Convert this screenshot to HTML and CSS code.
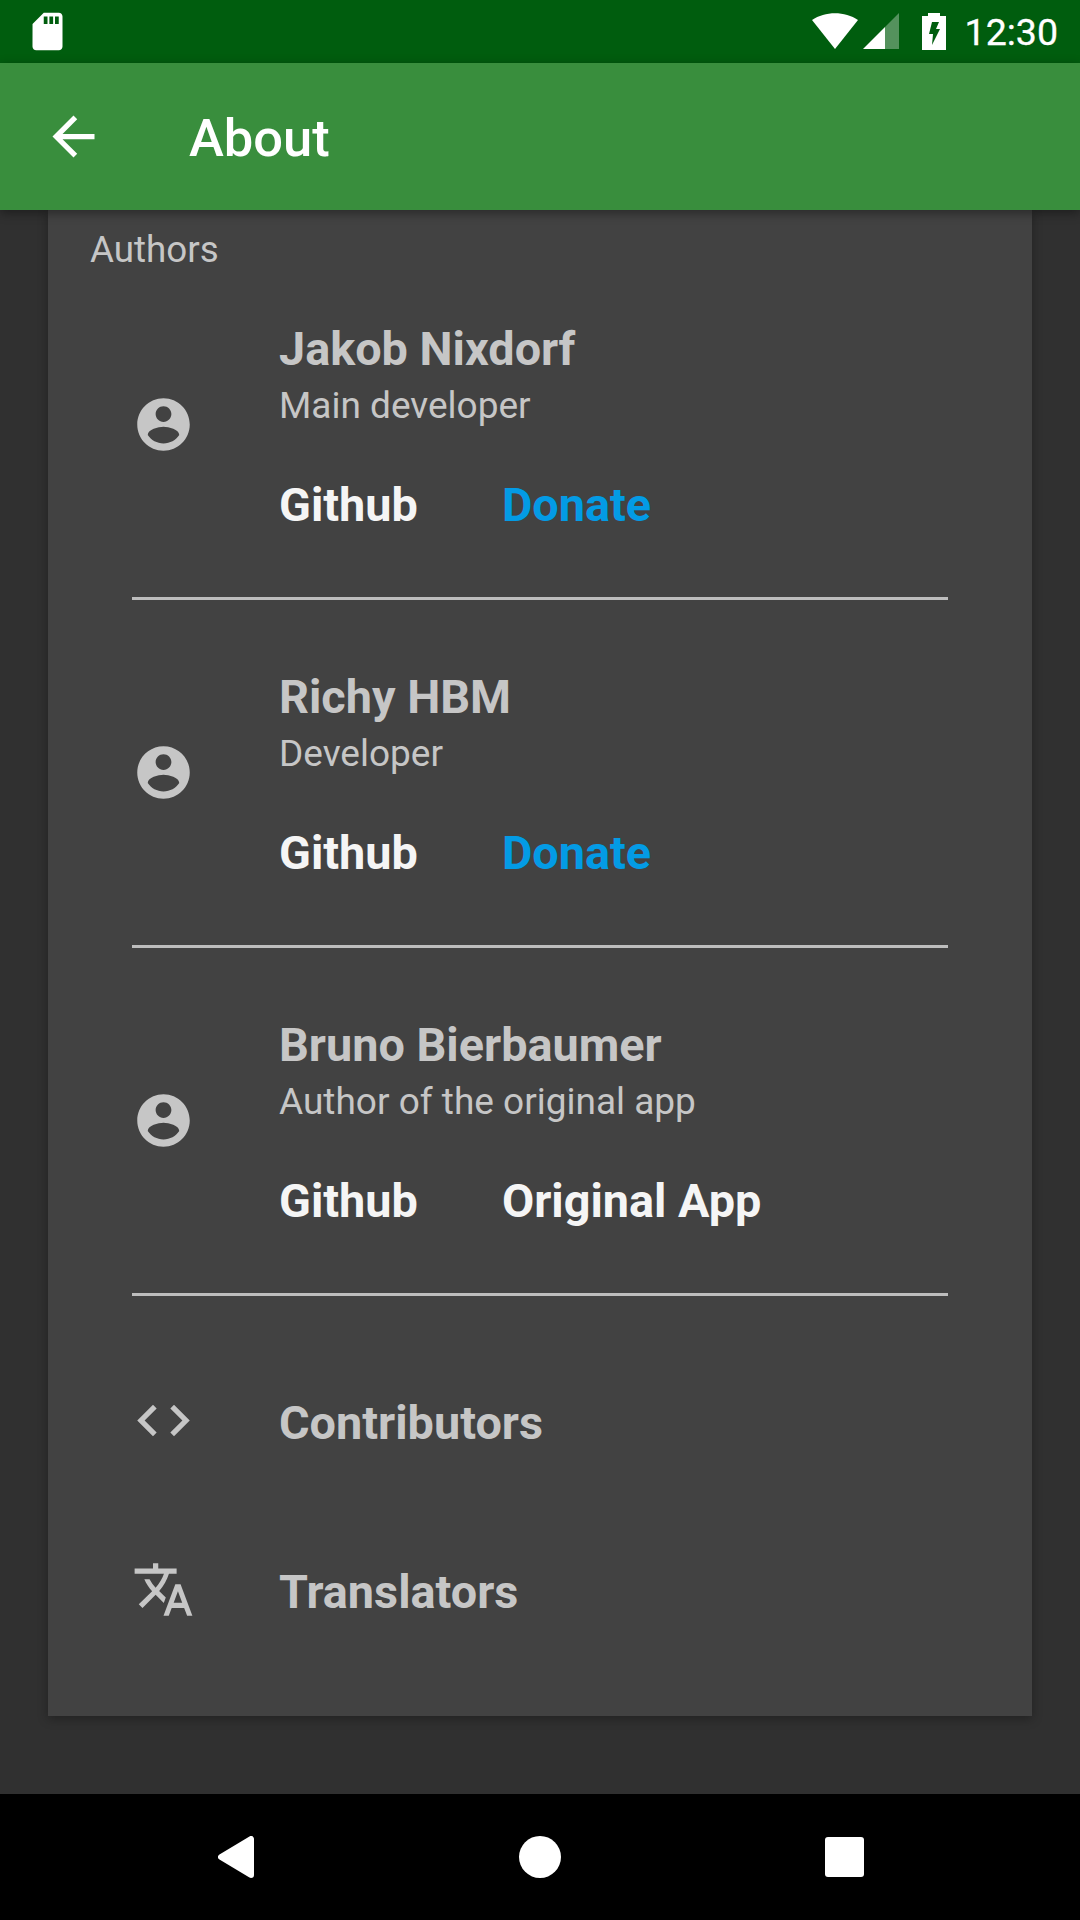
FILE: index.html
```html
<!DOCTYPE html>
<html lang="en">
<head>
    <meta charset="UTF-8">
    <meta name="viewport" content="width=device-width, initial-scale=1.0">
    <title>About</title>
    <link rel="stylesheet" href="styles.css">
</head>
<body>

<div class="statusBar">
    <svg class="sdIcon" viewBox="0 0 24 24"><path d="M18 2h-8L4.02 8 4 20c0 1.1.9 2 2 2h12c1.1 0 2-.9 2-2V4c0-1.1-.9-2-2-2zm-6 6h-2V4h2v4zm3 0h-2V4h2v4zm3 0h-2V4h2v4z"/></svg>
    <div class="statusRight">
        <svg class="wifiIcon" viewBox="0 0 46 36"><path d="M0 7C13-2 33-2 46 7L23 36Z"/></svg>
        <svg class="signalIcon" viewBox="0 0 36 36"><path d="M0 36L22 14V36Z"/><path class="dim" d="M22 14L36 0V36H22Z"/></svg>
        <svg class="batteryIcon" viewBox="0 0 24 37"><path fill-rule="evenodd" d="M6 3V0H18V3H24V37H0V3ZM10 9L7 21H11L10 32L18 16H14L17 9Z"/></svg>
        <span class="clock">12:30</span>
    </div>
</div>

<div class="appBar">
    <svg class="backIcon" viewBox="0 0 24 24"><path d="M20 11H7.83l5.59-5.59L12 4l-8 8 8 8 1.41-1.41L7.83 13H20v-2z"/></svg>
    <h1>About</h1>
</div>

<div class="content">
    <div class="card">
        <div class="cardTitle">Authors</div>

        <div class="author">
            <svg class="rowIcon" viewBox="0 0 24 24"><path d="M12 2C6.48 2 2 6.48 2 12s4.48 10 10 10 10-4.48 10-10S17.52 2 12 2zm0 3c1.66 0 3 1.34 3 3s-1.34 3-3 3-3-1.34-3-3 1.34-3 3-3zm0 14.2c-2.5 0-4.71-1.28-6-3.22.03-1.99 4-3.08 6-3.08 1.99 0 5.97 1.09 6 3.08-1.29 1.94-3.5 3.22-6 3.22z"/></svg>
            <div class="authorText">
                <div class="name">Jakob Nixdorf</div>
                <div class="role">Main developer</div>
                <div class="links">
                    <span class="link">Github</span>
                    <span class="link donate">Donate</span>
                </div>
            </div>
        </div>

        <div class="author">
            <svg class="rowIcon" viewBox="0 0 24 24"><path d="M12 2C6.48 2 2 6.48 2 12s4.48 10 10 10 10-4.48 10-10S17.52 2 12 2zm0 3c1.66 0 3 1.34 3 3s-1.34 3-3 3-3-1.34-3-3 1.34-3 3-3zm0 14.2c-2.5 0-4.71-1.28-6-3.22.03-1.99 4-3.08 6-3.08 1.99 0 5.97 1.09 6 3.08-1.29 1.94-3.5 3.22-6 3.22z"/></svg>
            <div class="authorText">
                <div class="name">Richy HBM</div>
                <div class="role">Developer</div>
                <div class="links">
                    <span class="link">Github</span>
                    <span class="link donate">Donate</span>
                </div>
            </div>
        </div>

        <div class="author">
            <svg class="rowIcon" viewBox="0 0 24 24"><path d="M12 2C6.48 2 2 6.48 2 12s4.48 10 10 10 10-4.48 10-10S17.52 2 12 2zm0 3c1.66 0 3 1.34 3 3s-1.34 3-3 3-3-1.34-3-3 1.34-3 3-3zm0 14.2c-2.5 0-4.71-1.28-6-3.22.03-1.99 4-3.08 6-3.08 1.99 0 5.97 1.09 6 3.08-1.29 1.94-3.5 3.22-6 3.22z"/></svg>
            <div class="authorText">
                <div class="name">Bruno Bierbaumer</div>
                <div class="role">Author of the original app</div>
                <div class="links">
                    <span class="link">Github</span>
                    <span class="link">Original App</span>
                </div>
            </div>
        </div>

        <div class="extras">
            <div class="extraRow">
                <svg class="rowIcon extraIcon" viewBox="0 0 24 24"><path d="M9.4 16.6L4.8 12l4.6-4.6L8 6l-6 6 6 6 1.4-1.4zm5.2 0l4.6-4.6-4.6-4.6L16 6l6 6-6 6-1.4-1.4z"/></svg>
                <div class="name">Contributors</div>
            </div>
            <div class="extraRow">
                <svg class="rowIcon extraIcon" viewBox="0 0 24 24"><path d="M12.87 15.07l-2.54-2.51.03-.03c1.74-1.94 2.98-4.17 3.71-6.53H17V4h-7V2H8v2H1v1.99h11.17C11.5 7.92 10.4 9.75 9 11.35 8.09 10.34 7.33 9.23 6.69 8.06h-2c.73 1.63 1.73 3.17 2.98 4.56l-5.09 5.02L4 19l5-5 3.11 3.11.76-2.04zM18.5 10h-2L12 22h2l1.12-3h4.75L21 22h2l-4.5-12zm-2.62 7l1.62-4.33L19.12 17h-3.24z"/></svg>
                <div class="name">Translators</div>
            </div>
        </div>
    </div>
</div>

<div class="navBar">
    <div class="navCell"><svg class="navBack" viewBox="0 0 36 42"><path d="M33 3V39L3 21Z"/></svg></div>
    <div class="navCell"><div class="navHome"></div></div>
    <div class="navCell"><div class="navRecent"></div></div>
</div>

</body>
</html>
```

FILE: styles.css
```css
body {
    margin: 0;
    width: 1080px;
    height: 1920px;
    display: flex;
    flex-direction: column;
    overflow: hidden;
    background-color: #303030;
    font-family: 'Roboto', sans-serif;
}

svg {
    display: block;
    flex: none;
    fill: #fff;
}

/* status bar */
.statusBar {
    height: 63px;
    flex: none;
    display: flex;
    align-items: center;
    justify-content: space-between;
    padding: 0 22px 0 25px;
    background-color: #005d0e;
}

.sdIcon {
    width: 45px;
    height: 45px;
    margin-top: -1px;
}

.statusRight {
    display: flex;
    align-items: center;
}

.wifiIcon {
    width: 46px;
    height: 36px;
    margin-top: -1px;
}

.signalIcon {
    width: 36px;
    height: 36px;
    margin-left: 5px;
    margin-top: -1px;
}

.signalIcon .dim {
    opacity: 0.33;
}

.batteryIcon {
    width: 24px;
    height: 37px;
    margin-left: 23px;
    margin-top: -1px;
    fill: #fff;
}

.clock {
    margin-left: 19px;
    font-size: 37.5px;
    color: #fff;
    -webkit-text-stroke: 0.3px #fff;
}

/* app bar */
.appBar {
    position: relative;
    z-index: 2;
    height: 147px;
    flex: none;
    display: flex;
    align-items: center;
    background-color: #398e3d;
    box-shadow: 0 3px 10px rgba(0, 0, 0, 0.4);
}

.backIcon {
    width: 63px;
    height: 63px;
    margin-left: 42px;
    margin-right: 84px;
}

.appBar h1 {
    margin: 2px 0 0;
    font-size: 52.5px;
    font-weight: 500;
    color: #fff;
}

/* card */
.content {
    flex: 1;
    padding: 0 48px;
}

.card {
    height: 1506px;
    box-sizing: border-box;
    padding: 0 84px;
    background-color: #424242;
    box-shadow: 0 3px 10px rgba(0, 0, 0, 0.3);
}

.cardTitle {
    margin: 0 0 -19px -42px;
    padding-top: 19px;
    font-size: 36.75px;
    line-height: 42px;
    color: #c6c6c6;
}

.author {
    height: 345px;
    display: flex;
    align-items: center;
    border-bottom: 3px solid #bdbdbd;
}

.rowIcon {
    width: 63px;
    height: 63px;
    margin-right: 84px;
    fill: #c6c6c6;
}

.extraIcon {
    margin-top: -4px;
}

.authorText {
    padding-top: 5px;
}

.name {
    font-size: 46.8px;
    line-height: 56px;
    font-weight: 700;
    color: #c6c6c6;
}

.extraRow .name {
    padding-top: 1px;
}

.role {
    margin-top: 7px;
    font-size: 37px;
    line-height: 44px;
    color: #c6c6c6;
}

.links {
    display: flex;
    gap: 84px;
    margin-top: 49px;
}

.link {
    font-size: 46.8px;
    line-height: 56px;
    font-weight: 700;
    color: #f5f5f5;
}

.donate {
    color: #039be5;
}

.extras {
    padding-top: 42px;
}

.extraRow {
    height: 169px;
    display: flex;
    align-items: center;
}

/* nav bar */
.navBar {
    height: 126px;
    flex: none;
    display: flex;
    justify-content: center;
    background-color: #000;
}

.navCell {
    width: 304px;
    display: flex;
    align-items: center;
    justify-content: center;
}

.navBack {
    width: 36px;
    height: 42px;
}

.navBack path {
    stroke: #fff;
    stroke-width: 6px;
    stroke-linejoin: round;
}

.navHome {
    width: 42px;
    height: 42px;
    border-radius: 50%;
    background-color: #fff;
}

.navRecent {
    width: 39px;
    height: 40px;
    border-radius: 3px;
    background-color: #fff;
}
```
